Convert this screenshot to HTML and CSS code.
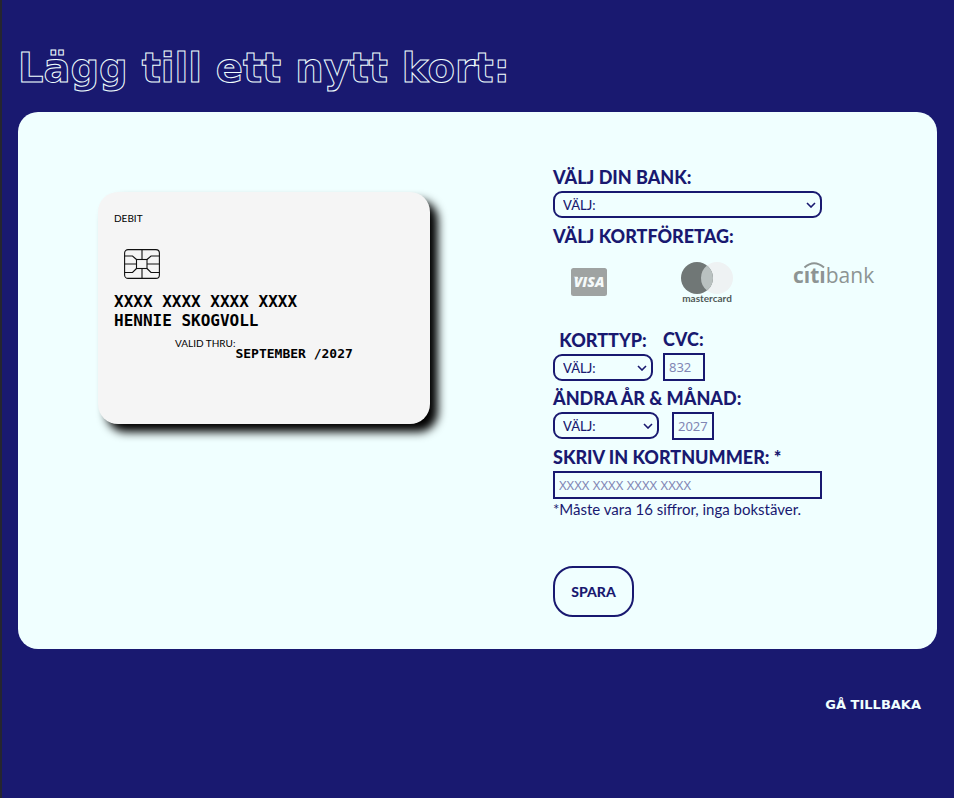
FILE: index.html
```html
<!DOCTYPE html>
<html lang="sv">
<head>
<meta charset="utf-8">
<meta name="viewport" content="width=device-width, initial-scale=1">
<title>Lägg till ett nytt kort</title>
<link rel="stylesheet" href="styles.css">
</head>
<body>
<main class="page">
  <h1 class="title">Lägg till ett nytt kort:</h1>
  <section class="panel">
    <div class="preview">
      <article class="card">
        <p class="card-kind">DEBIT</p>
        <svg class="chip" viewBox="0 0 36 30" width="36" height="30" fill="none" stroke="#111" stroke-width="1.1" aria-hidden="true">
          <rect x=".6" y=".6" width="34.8" height="28.8" rx="3.5"/>
          <rect x="12.5" y="10.5" width="10.5" height="9"/>
          <path d="M18 .6V10.5M18 19.5V29.4M.6 15H12.5M23 15H35.4M.6 7H8.5L12.5 10.5M35.4 7H27L23 10.5M.6 23.5H8.5L12.5 19.5M35.4 23.5H27L23 19.5"/>
        </svg>
        <p class="card-text">XXXX XXXX XXXX XXXX</p>
        <p class="card-text">HENNIE SKOGVOLL</p>
        <div class="valid"><span class="valid-label">VALID THRU:</span><span class="valid-date">SEPTEMBER /2027</span></div>
      </article>
    </div>
    <form class="form">
      <div class="field">
        <label for="bank">VÄLJ DIN BANK:</label>
        <select id="bank" class="wide"><option>VÄLJ:</option></select>
      </div>
      <fieldset class="brands">
        <legend>VÄLJ KORTFÖRETAG:</legend>
        <div class="brand-list">
          <button type="button" class="brand visa" aria-label="Visa">
            <svg viewBox="0 0 36 42" width="36" height="42" aria-hidden="true">
              <rect y="6" width="36" height="28" rx="2.5" fill="#9fa3a2"/>
              <text x="18" y="25" class="visa-text">VISA</text>
              <path d="M2.5 14.8H6.5L7.5 17Z" fill="#f5fafa"/>
            </svg>
          </button>
          <button type="button" class="brand" aria-label="Mastercard">
            <svg viewBox="0 0 56 42" width="56" height="42" aria-hidden="true">
              <circle cx="36" cy="16" r="16" fill="#eef2f3"/>
              <circle cx="16" cy="16" r="16" fill="#707776"/>
              <path d="M26 3.5A16 16 0 0 1 26 28.5A16 16 0 0 1 20 16A16 16 0 0 1 26 3.5Z" fill="#b9c1c0"/>
              <text x="26" y="40" class="mc-text">mastercard</text>
            </svg>
          </button>
          <button type="button" class="brand" aria-label="Citibank">
            <svg viewBox="0 0 86 42" width="86" height="42" aria-hidden="true">
              <path d="M11.5 5.500Q21 -3 31 5.500" fill="none" stroke="#8d9493" stroke-width="2"/>
              <text x="0" y="21" class="citi-text"><tspan class="citi-bold">cıtı</tspan><tspan>bank</tspan></text>
            </svg>
          </button>
        </div>
      </fieldset>
      <div class="row type-row">
        <div class="field centered">
          <label for="type">KORTTYP:</label>
          <select id="type" class="type"><option>VÄLJ:</option></select>
        </div>
        <div class="field">
          <label for="cvc">CVC:</label>
          <input id="cvc" class="short" type="text" placeholder="832">
        </div>
      </div>
      <div class="field">
        <label for="month">ÄNDRA ÅR &amp; MÅNAD:</label>
        <div class="row date-row">
          <select id="month" class="month"><option>VÄLJ:</option></select>
          <input class="short" type="text" placeholder="2027" aria-label="År">
        </div>
      </div>
      <div class="field">
        <label for="number">SKRIV IN KORTNUMMER: *</label>
        <input id="number" class="wide" type="text" placeholder="XXXX XXXX XXXX XXXX">
        <p class="hint">*Måste vara 16 siffror, inga bokstäver.</p>
      </div>
      <button type="submit" class="save">SPARA</button>
    </form>
  </section>
  <a class="back" href="#">GÅ TILLBAKA</a>
</main>
</body>
</html>
```
FILE: styles.css
```css
* { box-sizing: border-box; }
body {
  margin: 0;
  background: midnightblue;
  color: midnightblue;
  font-family: Lato, "Liberation Sans", sans-serif;
}
p { margin: 0; }
.page {
  min-height: 100vh;
  padding: 44px 17px 80px 16px;
  border-left: 2px solid #252530;
  display: flex;
  flex-direction: column;
}
.title {
  margin: 0 0 20px;
  font: bold 40px/48px "DejaVu Sans", sans-serif;
  color: transparent;
  -webkit-text-stroke: 1px azure;
}
.panel {
  display: grid;
  grid-template-columns: 455fr 328fr;
  padding: 55px 56px 32px 80px;
  background: azure;
  border-radius: 20px;
}
.preview { padding-top: 25px; }
.card {
  width: 332px;
  height: 232px;
  padding: 16px;
  background: whitesmoke;
  color: #000;
  border-radius: 20px;
  box-shadow: 8px 8px 10px #000;
}
.card-kind { font-size: 10px; line-height: 20px; }
.chip { display: block; margin: 21px 0 13px 10px; }
.card-text { font: bold 16px/19px "DejaVu Sans Mono", monospace; }
.valid { display: flex; margin-left: 61px; line-height: 20px; }
.valid-label { font-size: 10px; margin-top: 3px; }
.valid-date {
  margin-top: 14px;
  font-family: "DejaVu Sans Mono", monospace;
  font-size: 13px;
  font-weight: bold;
}
.form { display: flex; flex-direction: column; gap: 7px; }
.field { display: flex; flex-direction: column; align-items: flex-start; gap: 4px; }
.centered { align-items: center; }
label, legend {
  padding: 0;
  font: 900 18px/20px Lato, sans-serif;
  white-space: nowrap;
}
select, input {
  height: 28px;
  border: 2px solid midnightblue;
  background: transparent;
  color: midnightblue;
  font: 13px "Noto Sans", sans-serif;
}
select {
  height: 27px;
  padding: 0 8px;
  appearance: none;
  border-radius: 9px;
  background: url("data:image/svg+xml,%3Csvg xmlns='http://www.w3.org/2000/svg' width='10' height='6' fill='none' stroke='midnightblue' stroke-width='1.6'%3E%3Cpath d='M1 1l4 4 4-4'/%3E%3C/svg%3E") no-repeat right 4px center;
  font: 500 13px Lato, sans-serif;
}
input { padding: 0 4px; border-radius: 0; }
input::placeholder { color: #8186b4; }
.wide { width: 269px; }
.type { width: 100px; }
.month { width: 106px; }
.short { width: 42px; }
.brands { margin: 1px 0 0; padding: 0; border: 0; min-width: 0; }
.brand-list { display: flex; gap: 56px; padding: 16px 0 18px; }
.brand { display: flex; padding: 0; border: 0; background: none; }
.brand svg { overflow: visible; }
.visa { width: 72px; justify-content: center; }
.visa-text {
  font: italic 900 14px "Open Sans", sans-serif;
  fill: #f5fafa;
  text-anchor: middle;
}
.mc-text { font: bold 10px Lato, sans-serif; fill: #505958; text-anchor: middle; }
.citi-text { font: 400 21px "Open Sans", sans-serif; fill: #8d9493; }
.citi-bold { font-weight: 700; }
.row { display: flex; }
.type-row { gap: 10px; align-items: flex-end; }
.date-row { gap: 13px; }
.hint { font-size: 15px; line-height: 20px; margin-top: -4px; white-space: nowrap; }
.save {
  align-self: flex-start;
  width: 81px;
  height: 51px;
  margin-top: 40px;
  padding: 0;
  border: 2px solid midnightblue;
  border-radius: 20px;
  background: transparent;
  color: midnightblue;
  font: 900 14px Lato, sans-serif;
}
.back {
  align-self: flex-end;
  margin: 46px 16px 0 0;
  color: azure;
  font: bold 13px/20px "DejaVu Sans", sans-serif;
  text-decoration: none;
}
```
